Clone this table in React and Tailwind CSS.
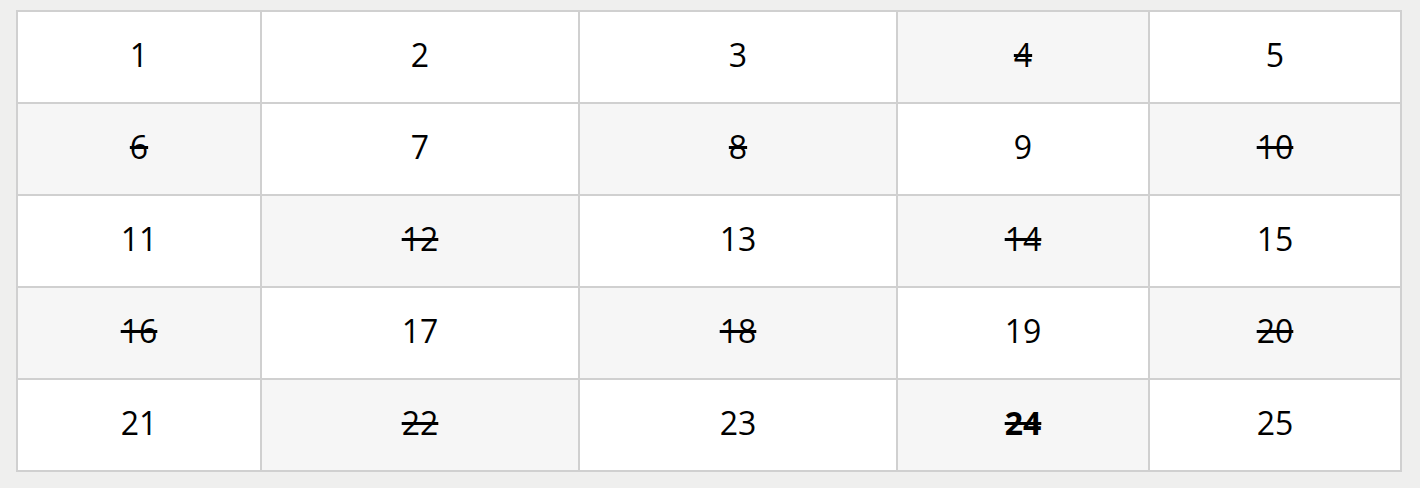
import React from "react";

const Cell = ({ n }) => {
  const struck = n % 2 === 0 && n > 2; // evens from 4 are crossed out
  return (
    <div
      className={`h-[90px] pb-[4px] flex items-center justify-center text-[32px] text-black ${
        struck ? "bg-[#f6f6f6] line-through" : "bg-white"
      } ${n === 24 ? "font-bold" : "font-normal"}`}
    >
      {n}
    </div>
  );
};

export default function App() {
  const nums = Array.from({ length: 25 }, (_, i) => i + 1);

  return (
    <div
      className="w-[1420px] h-[488px] bg-[#efefee] pt-[10px] pl-[16px]"
      style={{ fontFamily: '"Open Sans", "Noto Sans", sans-serif' }}
    >
      {/* Number grid */}
      <div className="inline-grid grid-cols-[242px_316px_316px_250px_250px] gap-[2px] p-[2px] bg-[#d0d0d0]">
        {nums.map((n) => (
          <Cell key={n} n={n} />
        ))}
      </div>
    </div>
  );
}
